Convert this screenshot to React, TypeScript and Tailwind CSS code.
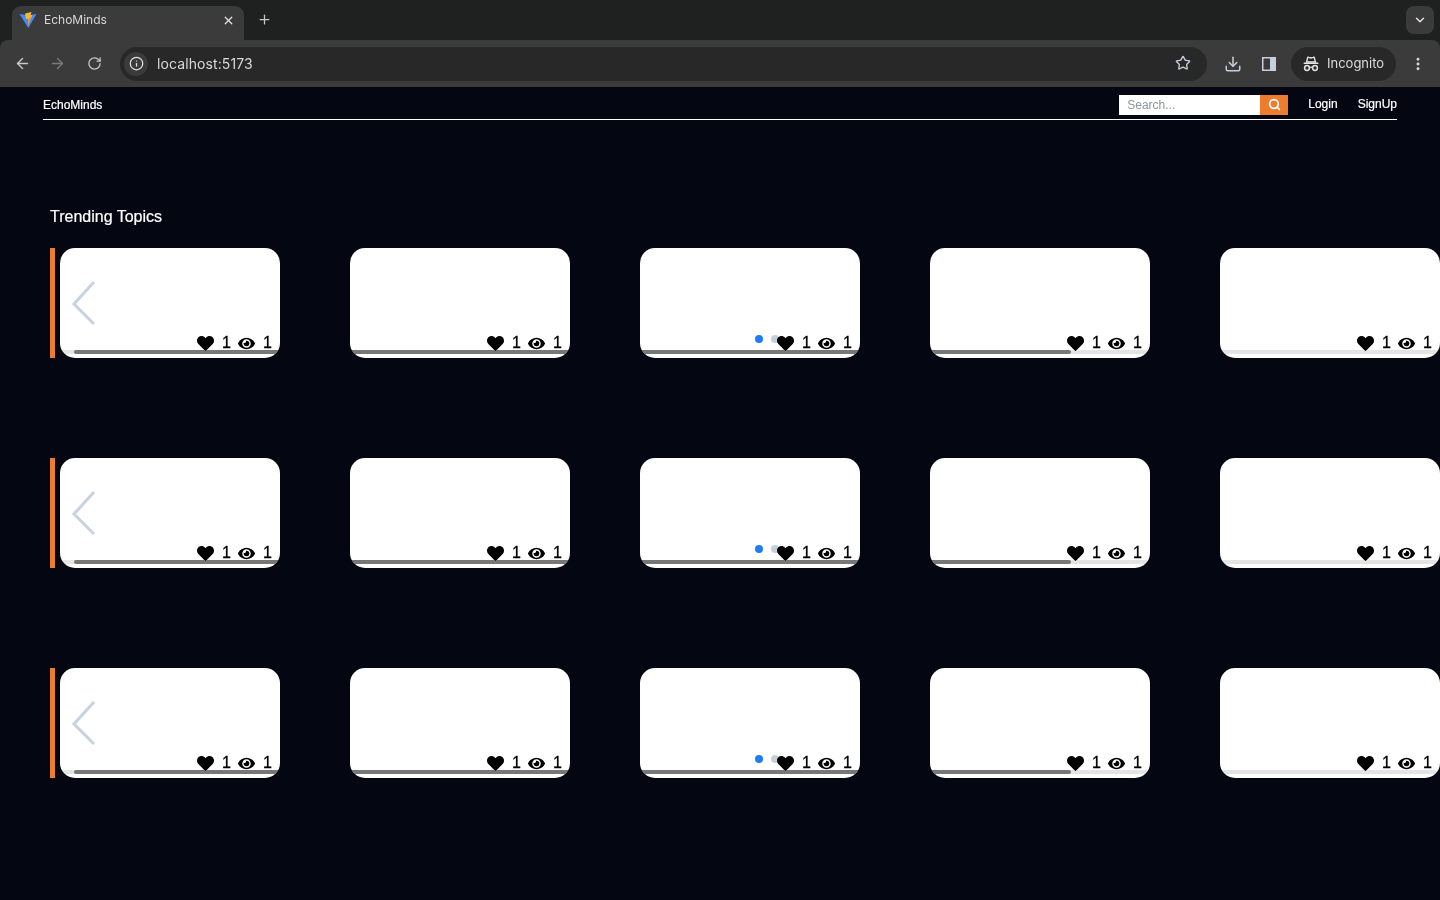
import React from "react";
import { ArrowLeft, ArrowRight, RotateCw, Info, Star, Download, X, Plus, ChevronDown, EllipsisVertical, Search } from "lucide-react";
import { FaHeart, FaEye } from "react-icons/fa";

const cards = [0, 1, 2, 3, 4];

function Vite() {
  return (
    <svg width="18" height="18" viewBox="0 0 18 18" className="shrink-0">
      <path d="M0.5 3 L9 4.2 L17.5 3 L9.3 17 Z" fill="#3f8cff" />
      <path d="M6 2.5 L12.5 1 L11.6 4 L13.4 4 L8.8 14.5 L9.4 8 L7 8 Z" fill="#f7b733" />
      <path d="M9.3 8 L12 6 L9 15 Z" fill="#f08a2c" />
    </svg>
  );
}

function Incognito() {
  return (
    <svg width="16" height="16" viewBox="0 0 16 16" fill="none" className="shrink-0">
      <path d="M3.6 6 L4.6 1.8 C4.7 1.2 5.3 1.1 5.8 1.3 L8 2 L10.2 1.3 C10.7 1.1 11.3 1.2 11.4 1.8 L12.4 6 Z" stroke="#e3e3e3" strokeWidth="1.4" />
      <rect x="0.5" y="6.6" width="15" height="1.5" rx="0.75" fill="#e3e3e3" />
      <circle cx="4" cy="12" r="2.4" stroke="#e3e3e3" strokeWidth="1.5" />
      <circle cx="12" cy="12" r="2.4" stroke="#e3e3e3" strokeWidth="1.5" />
      <path d="M6.4 11.6 C7.4 11 8.6 11 9.6 11.6" stroke="#e3e3e3" strokeWidth="1.3" />
    </svg>
  );
}

function SidePanel() {
  return (
    <svg width="14" height="14" viewBox="0 0 14 14" className="shrink-0">
      <rect x="0.75" y="0.75" width="12.5" height="12.5" fill="none" stroke="#c5cfdd" strokeWidth="1.5" />
      <rect x="8" y="1" width="5" height="12" fill="#c5cfdd" />
    </svg>
  );
}

function BrowserChrome() {
  return (
    <div className="h-[87px] shrink-0 flex flex-col bg-[#1f2020] font-['Inter','Liberation_Sans',sans-serif]">
      <div className="h-[40px] flex items-end pl-[12px] pr-[6px] relative">
        <div className="w-[232px] h-[34px] bg-[#3b3b3b] rounded-t-[9px] flex items-center pl-[7px] pr-[9px] text-[#d8d8d8] text-[12px] pb-[6px]">
          <Vite />
          <span className="ml-[7px] flex-1">EchoMinds</span>
          <X size={13} strokeWidth={2.4} className="text-[#e6e6e6]" />
        </div>
        <Plus size={15} strokeWidth={2} className="text-[#c9c9c9] ml-[12.5px] mb-[13px]" />
        <div className="ml-auto mb-[6px] w-[28px] h-[28px] rounded-[8px] bg-[#3b3b3b] flex items-center justify-center">
          <ChevronDown size={14} strokeWidth={2.5} className="text-[#e3e3e3]" />
        </div>
      </div>
      <div className="h-[47px] bg-[#3b3b3b] rounded-t-[8px] flex items-center pl-[14px] pr-[14px]">
        <ArrowLeft size={17} className="text-[#c8c8c8]" />
        <ArrowRight size={17} className="text-[#7a7a7a] ml-[18px]" />
        <RotateCw size={15} className="text-[#c8c8c8] ml-[21px]" />
        <div className="ml-[18px] flex-1 h-[34px] rounded-full bg-[#282828] flex items-center pl-[4px] pr-[16px]">
          <div className="w-[24px] h-[24px] rounded-full bg-[#3b3b3b] flex items-center justify-center">
            <Info size={15} className="text-[#e3e3e3]" />
          </div>
          <span className="ml-[9px] text-[14px] text-[#d8d8d8] tracking-[0.1px] mb-[1px]">localhost:5173</span>
          <Star size={16} className="ml-auto text-[#c5cfdd] mb-[1px]" />
        </div>
        <Download size={18} className="ml-[17px] text-[#c5cfdd]" />
        <div className="ml-[20px]"><SidePanel /></div>
        <div className="ml-[15px] w-[105px] h-[34px] rounded-full bg-[#282828] flex items-center pl-[12px] gap-[8px] text-[13px] text-[#dcdcdc]">
          <Incognito />
          <span className="mt-[1px]">Incognito</span>
        </div>
        <EllipsisVertical size={16} strokeWidth={2.4} className="ml-[14px] text-[#dcdcdc]" />
      </div>
    </div>
  );
}

function Card({ dots }: { dots?: boolean }) {
  return (
    <div className="relative w-[220px] h-[110px] shrink-0 bg-white rounded-[15px] flex justify-end items-end pb-[6px] pr-[10px]">
      {dots && (
        <div className="absolute left-[115px] top-[87px] flex gap-[8px]">
          <span className="w-[8px] h-[8px] rounded-full bg-[#1d7df5]" />
          <span className="w-[8px] h-[8px] rounded-full bg-[#c8d0dc]" />
        </div>
      )}
      <div className="relative flex items-center text-black text-[16px] leading-[18px] [-webkit-text-stroke:0.3px_black]">
        <FaHeart size={17} />
        <span className="ml-[8px] w-[7px]">1</span>
        <FaEye size={17} className="ml-[9px]" />
        <span className="ml-[8px] w-[7px]">1</span>
      </div>
    </div>
  );
}

function Row() {
  return (
    <div className="relative h-[110px] flex ml-[50px] overflow-hidden">
      <div className="w-[5px] h-[110px] shrink-0 bg-[#ec7d2e]" />
      <div className="flex gap-[70px] ml-[5px]">
        {cards.map((c) => (
          <Card key={c} dots={c === 2} />
        ))}
      </div>
      <svg width="26" height="46" viewBox="0 0 26 46" fill="none" className="absolute left-[20px] top-[32px]">
        <path d="M24 2 L4 24 L24 44" stroke="#c8d2e0" strokeWidth="3" />
      </svg>
      <div className="absolute left-[10px] right-0 top-[102px] h-[4px] bg-[#e4e4e4] mix-blend-darken">
        <div className="absolute left-[14px] top-0 h-[4px] w-[997px] rounded-full bg-[#777777]" />
      </div>
    </div>
  );
}

export default function App() {
  return (
    <div className="w-[1440px] h-[900px] overflow-hidden flex flex-col bg-[#040612] font-['Liberation_Sans',Arial,sans-serif]">
      <BrowserChrome />
      <div className="h-[33px] mx-[43px] border-b border-white flex items-center text-white text-[12px] shrink-0 pt-[3px] [-webkit-text-stroke:0.2px_white]">
        <span className="mt-[1px]">EchoMinds</span>
        <div className="ml-auto flex items-center h-[20px] [-webkit-text-stroke:0]">
          <div className="w-[141px] h-[20px] bg-white text-[#8d93a0] pl-[8px] flex items-center text-[12px]">Search...</div>
          <div className="w-[28px] h-[20px] bg-[#ec7d2e] flex items-center justify-center">
            <Search size={13} strokeWidth={3.2} className="text-white" />
          </div>
        </div>
        <span className="ml-[20px] mb-[1px]">Login</span>
        <span className="ml-[20px] mb-[1px]">SignUp</span>
      </div>
      <h1 className="ml-[50px] mt-[87px] text-[16px] leading-[20px] text-white font-normal [-webkit-text-stroke:0.2px_white]">Trending Topics</h1>
      <div className="mt-[21px] flex flex-col gap-[100px]">
        <Row />
        <Row />
        <Row />
      </div>
    </div>
  );
}
